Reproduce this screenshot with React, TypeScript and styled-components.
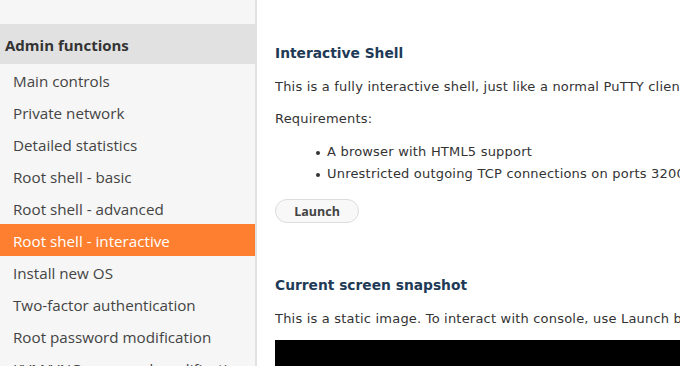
import React from "react";
import styled, { createGlobalStyle } from "styled-components";

const Global = createGlobalStyle`
  html, body { margin: 0; padding: 0; background: #fff; }
  body { width: 680px; height: 366px; overflow: hidden; }
  * { box-sizing: border-box; }
`;

const Page = styled.div`
  display: flex;
  width: 680px;
  height: 366px;
  overflow: hidden;
`;

const Sidebar = styled.nav`
  flex: 0 0 257px;
  background: #f6f6f6;
  border-right: 2px solid #e1e1e1;
  padding-top: 24px;
  font-family: "Open Sans", "Segoe UI", sans-serif;
`;

const SideHeader = styled.div`
  height: 40px;
  margin-right: -2px;
  background: #e1e1e1;
  display: flex;
  align-items: center;
  padding: 1px 0 0 5px;
  font-weight: 700;
  font-size: 15px;
  color: #333;
`;

const NavItem = styled.div<{ $active?: boolean }>`
  height: 32px;
  display: flex;
  align-items: center;
  padding: 2px 0 0 13px;
  font-size: 15.2px;
  color: ${(p) => (p.$active ? "#ffffff" : "#444")};
  background: ${(p) => (p.$active ? "#ff7f30" : "transparent")};
  white-space: nowrap;
  overflow: hidden;
`;

const Main = styled.main`
  flex: 1;
  padding: 43px 0 0 18px;
  font-family: "DejaVu Sans", Verdana, sans-serif;
  color: #333;
  white-space: nowrap;
  overflow: hidden;
`;

const Heading = styled.h2<{ $top?: number }>`
  margin: ${(p) => p.$top ?? 0}px 0 0 0;
  font-size: 13.8px;
  font-weight: 700;
  color: #1e3a56;
  line-height: 20px;
`;

const Para = styled.p<{ $top?: number }>`
  margin: ${(p) => p.$top ?? 14}px 0 0 0;
  font-size: 13px;
  line-height: 18px;
  letter-spacing: 0.2px;
`;

const List = styled.ul`
  margin: 13px 0 0 0;
  padding-left: 52px;
  font-size: 13px;
  line-height: 22px;
  letter-spacing: 0.2px;
  list-style: none;
`;

const Bullet = styled.li`
  position: relative;
  &::before {
    content: "";
    position: absolute;
    left: -11px;
    top: 10px;
    width: 4px;
    height: 4px;
    border-radius: 50%;
    background: #333;
  }
`;

const Button = styled.button`
  margin-top: 14px;
  width: 84px;
  height: 24px;
  border: 1px solid #dcdcdc;
  border-radius: 12px;
  background: #f8f8f8;
  font-family: "Open Sans", "Segoe UI", sans-serif;
  font-weight: 700;
  font-size: 12.5px;
  color: #444;
  padding: 0;
  display: block;
`;

const Screen = styled.div`
  margin-top: 12px;
  height: 60px;
  background: #000;
`;

const items = [
  "Main controls",
  "Private network",
  "Detailed statistics",
  "Root shell - basic",
  "Root shell - advanced",
  "Root shell - interactive",
  "Install new OS",
  "Two-factor authentication",
  "Root password modification",
  "KVM/VNC password modification",
];

export default function App() {
  return (
    <Page>
      <Global />
      <Sidebar>
        <SideHeader>Admin functions</SideHeader>
        {items.map((t) => (
          <NavItem key={t} $active={t === "Root shell - interactive"}>
            {t}
          </NavItem>
        ))}
      </Sidebar>
      <Main>
        <Heading>Interactive Shell</Heading>
        <Para $top={15}>This is a fully interactive shell, just like a normal PuTTY client or terminal.</Para>
        <Para>Requirements:</Para>
        <List>
          <Bullet>A browser with HTML5 support</Bullet>
          <Bullet>Unrestricted outgoing TCP connections on ports 32000-32999</Bullet>
        </List>
        <Button>Launch</Button>
        <Heading $top={52}>Current screen snapshot</Heading>
        <Para $top={15}>This is a static image. To interact with console, use Launch button above.</Para>
        <Screen />
      </Main>
    </Page>
  );
}
